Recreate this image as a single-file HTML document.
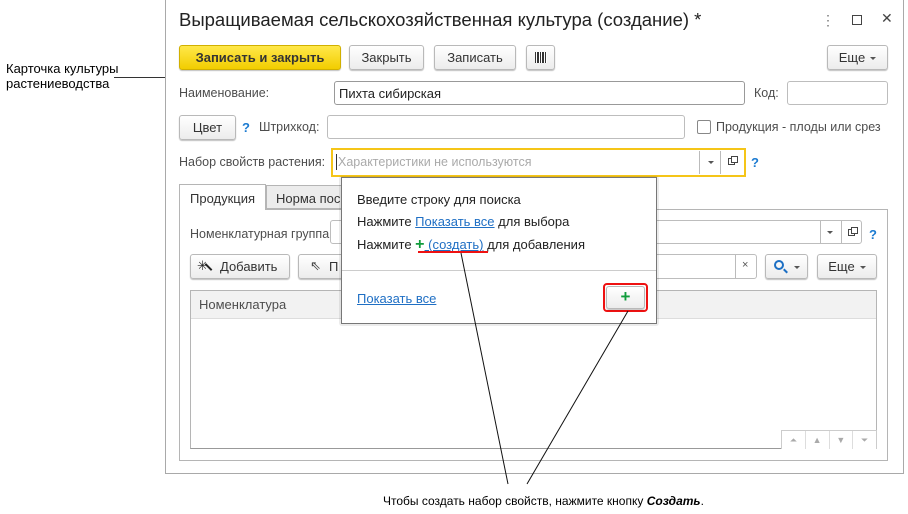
<!DOCTYPE html>
<html><head><meta charset="utf-8"><style>
*{box-sizing:border-box;margin:0;padding:0}
body{width:908px;height:514px;background:#fff;position:relative;overflow:hidden;font-family:"Liberation Sans",Arial,sans-serif;font-size:12.5px;color:#333}
.a{position:absolute}
.btn{position:absolute;border:1px solid #b9b9b9;border-radius:3px;background:linear-gradient(#fff,#ececec);box-shadow:0 1px 1px rgba(0,0,0,.25);text-align:center;color:#333;font-size:13px}
.inp{position:absolute;border:1px solid #bdbdbd;border-radius:3px;background:#fff}
.lbl{position:absolute;color:#4d4d4d;font-size:12.5px}
.q{position:absolute;color:#1c7bd1;font-size:13px;font-weight:bold}
.tri{display:inline-block;width:0;height:0;border-left:3px solid transparent;border-right:3px solid transparent;border-top:3px solid #555;vertical-align:middle;margin-left:5px}
a{color:#1f6fc4;text-decoration:underline}
</style></head><body>
<div class="a" style="left:6px;top:61px;font-size:13px;line-height:15px;color:#000">Карточка культуры<br>растениеводства</div>
<div class="a" style="left:114px;top:77px;width:52px;height:1px;background:#333"></div>

<div class="a" style="left:165px;top:-2px;width:739px;height:476px;border:1px solid #a9a9a9;background:#fff"></div>
<div class="a" style="left:179px;top:9px;font-size:18.5px;color:#222">Выращиваемая сельскохозяйственная культура (создание) *</div>
<div class="a" style="left:821px;top:12px;font-size:14px;color:#777">⋮</div>
<div class="a" style="left:852px;top:15px;width:10px;height:10px;border:1.5px solid #444"></div>
<div class="a" style="left:881px;top:10px;font-size:14px;color:#444">✕</div>

<div class="btn" style="left:179px;top:45px;width:162px;height:25px;line-height:23px;background:linear-gradient(#ffe84a,#f2cd00);border-color:#d1b000;font-weight:bold;color:#333">Записать и закрыть</div>
<div class="btn" style="left:349px;top:45px;width:75px;height:25px;line-height:23px">Закрыть</div>
<div class="btn" style="left:434px;top:45px;width:82px;height:25px;line-height:23px">Записать</div>
<div class="btn" style="left:526px;top:45px;width:29px;height:25px"><div class="a" style="left:8px;top:6px;width:12px;height:11px;background:repeating-linear-gradient(90deg,#333 0 1px,#fff 1px 2px,#333 2px 4px,#fff 4px 5px)"></div></div>
<div class="btn" style="left:827px;top:45px;width:61px;height:25px;line-height:23px">Еще<span class="tri"></span></div>

<div class="lbl" style="left:179px;top:86px">Наименование:</div>
<div class="inp" style="left:334px;top:81px;width:411px;height:24px;border-color:#999"><span class="a" style="left:4px;top:4px;color:#222;font-size:13px">Пихта сибирская</span></div>
<div class="lbl" style="left:754px;top:86px">Код:</div>
<div class="inp" style="left:787px;top:81px;width:101px;height:24px"></div>

<div class="btn" style="left:179px;top:115px;width:57px;height:25px;line-height:23px">Цвет</div>
<div class="q" style="left:242px;top:120px">?</div>
<div class="lbl" style="left:259px;top:120px">Штрихкод:</div>
<div class="inp" style="left:327px;top:115px;width:358px;height:24px"></div>
<div class="a" style="left:697px;top:120px;width:14px;height:14px;border:1px solid #888;border-radius:2px"></div>
<div class="lbl" style="left:716px;top:120px">Продукция - плоды или срез</div>

<div class="lbl" style="left:179px;top:155px">Набор свойств растения:</div>
<div class="a" style="left:331px;top:148px;width:415px;height:29px;border:2px solid #f5c518;background:#fff"></div>
<div class="a" style="left:338px;top:155px;color:#aaa;font-size:12.5px">Характеристики не используются</div>
<div class="a" style="left:336px;top:154px;width:1px;height:16px;background:#333"></div>
<div class="a" style="left:699px;top:151px;width:1px;height:23px;background:#bbb"></div>
<div class="a" style="left:708px;top:161px;border-left:3px solid transparent;border-right:3px solid transparent;border-top:3px solid #555"></div>
<div class="a" style="left:720px;top:151px;width:1px;height:23px;background:#bbb"></div>
<div class="a" style="left:728px;top:158px;width:7px;height:7px;border:1px solid #444;background:#fff"></div>
<div class="a" style="left:731px;top:156px;width:7px;height:7px;border:1px solid #444;background:#fff"></div>
<div class="q" style="left:751px;top:155px">?</div>

<div class="a" style="left:179px;top:209px;width:709px;height:252px;border:1px solid #b5b5b5"></div>
<div class="a" style="left:179px;top:184px;width:87px;height:26px;border:1px solid #b5b5b5;border-bottom:none;background:#fff;padding:6px 0 0 10px;font-size:13px">Продукция</div>
<div class="a" style="left:266px;top:185px;width:90px;height:24px;border:1px solid #b5b5b5;background:#ececec;padding:5px 0 0 9px;font-size:13px">Норма пос</div>

<div class="lbl" style="left:190px;top:227px">Номенклатурная группа:</div>
<div class="inp" style="left:330px;top:220px;width:532px;height:24px"></div>
<div class="a" style="left:820px;top:221px;width:1px;height:22px;background:#bbb"></div>
<div class="a" style="left:827px;top:231px;border-left:3px solid transparent;border-right:3px solid transparent;border-top:3px solid #555"></div>
<div class="a" style="left:841px;top:221px;width:1px;height:22px;background:#bbb"></div>
<div class="a" style="left:848px;top:229px;width:7px;height:7px;border:1px solid #444;background:#fff"></div>
<div class="a" style="left:851px;top:227px;width:7px;height:7px;border:1px solid #444;background:#fff"></div>
<div class="q" style="left:869px;top:227px">?</div>

<div class="btn" style="left:190px;top:254px;width:100px;height:25px;line-height:23px;text-align:left;padding-left:29px">Добавить</div>
<div class="a" style="left:197px;top:258px;font-size:13px;color:#222">✳</div>
<div class="a" style="left:204px;top:266px;width:9px;height:2px;background:#222;transform:rotate(45deg)"></div>
<div class="btn" style="left:298px;top:254px;width:60px;height:25px;line-height:23px;text-align:left;padding-left:30px">П</div>
<div class="a" style="left:310px;top:258px;font-size:13px;color:#444">⇖</div>
<div class="inp" style="left:620px;top:254px;width:137px;height:25px"></div>
<div class="a" style="left:735px;top:255px;width:1px;height:23px;background:#bbb"></div>
<div class="a" style="left:742px;top:259px;color:#555;font-size:11px">×</div>
<div class="btn" style="left:765px;top:254px;width:43px;height:25px"><span class="a" style="left:8px;top:5px;width:10px;height:10px;border:2px solid #1c6fc4;border-radius:50%"></span><span class="a" style="left:17px;top:15px;width:5px;height:2px;background:#1c6fc4;transform:rotate(45deg)"></span><span class="a" style="left:28px;top:11px;border-left:3px solid transparent;border-right:3px solid transparent;border-top:3px solid #555"></span></div>
<div class="btn" style="left:817px;top:254px;width:60px;height:25px;line-height:23px">Еще<span class="tri"></span></div>

<div class="a" style="left:190px;top:290px;width:687px;height:159px;border:1px solid #b5b5b5;border-bottom-color:#999"></div>
<div class="a" style="left:191px;top:291px;width:685px;height:28px;background:#f2f2f2;border-bottom:1px solid #ddd"></div>
<div class="a" style="left:199px;top:297px;font-size:13px;color:#4d4d4d">Номенклатура</div>
<div class="a" style="left:781px;top:430px;width:96px;height:19px;border:1px solid #ccc;border-bottom:none;background:#fff;font-size:9px;color:#aaa;display:flex"><span style="flex:1;text-align:center;line-height:18px;border-right:1px solid #ddd">⏶</span><span style="flex:1;text-align:center;line-height:18px;border-right:1px solid #ddd">▲</span><span style="flex:1;text-align:center;line-height:18px;border-right:1px solid #ddd">▼</span><span style="flex:1;text-align:center;line-height:18px">⏷</span></div>

<div class="a" style="left:339px;top:176px;width:320px;height:150px;background:rgba(0,0,0,.08);border-radius:3px"></div>
<div class="a" style="left:341px;top:177px;width:316px;height:147px;border:1px solid #777;background:#fff"></div>
<div class="a" style="left:357px;top:192px;font-size:13px;color:#222">Введите строку для поиска</div>
<div class="a" style="left:357px;top:214px;font-size:13px;color:#222">Нажмите <a>Показать все</a> для выбора</div>
<div class="a" style="left:357px;top:236px;font-size:13px;color:#222">Нажмите <b style="color:#119c3c;font-size:16px">+</b><a> (создать)</a> для добавления</div>
<div class="a" style="left:418px;top:251px;width:70px;height:2px;background:#e11"></div>
<div class="a" style="left:342px;top:270px;width:314px;height:1px;background:#ccc"></div>
<div class="a" style="left:357px;top:291px;font-size:13px"><a>Показать все</a></div>
<div class="a" style="left:603px;top:283px;width:45px;height:29px;border:2px solid #e11;border-radius:4px"></div>
<div class="btn" style="left:606px;top:286px;width:39px;height:23px;line-height:20px;color:#119c3c;font-weight:bold;font-size:17px">+</div>

<svg class="a" style="left:0;top:0" width="908" height="514"><line x1="461" y1="253" x2="508" y2="484" stroke="#111" stroke-width="1"/><line x1="628" y1="311" x2="527" y2="484" stroke="#111" stroke-width="1"/></svg>
<div class="a" style="left:383px;top:494px;font-size:12px;color:#000">Чтобы создать набор свойств, нажмите кнопку <b><i>Создать</i></b>.</div>
</body></html>
